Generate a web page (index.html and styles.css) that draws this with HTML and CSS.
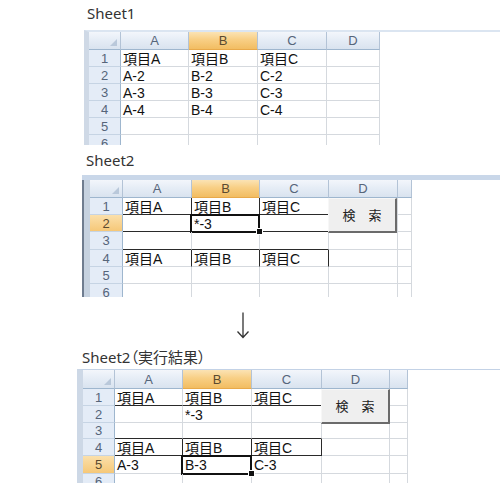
FILE: index.html
```html
<!DOCTYPE html>
<html lang="ja">
<head>
<meta charset="utf-8">
<link rel="stylesheet" href="styles.css">
</head>
<body>
<div class="page">
  <section class="block block1">
    <div class="label">Sheet1</div>
    <div class="sheet sheet1">
      <div class="grid g1">
        <div class="corner"></div><div class="ch">A</div><div class="ch sel">B</div><div class="ch">C</div><div class="ch">D</div>
        <div class="rh">1</div><div class="c">項目A</div><div class="c">項目B</div><div class="c">項目C</div><div class="c"></div>
        <div class="rh">2</div><div class="c">A-2</div><div class="c">B-2</div><div class="c">C-2</div><div class="c"></div>
        <div class="rh">3</div><div class="c">A-3</div><div class="c">B-3</div><div class="c">C-3</div><div class="c"></div>
        <div class="rh">4</div><div class="c">A-4</div><div class="c">B-4</div><div class="c">C-4</div><div class="c"></div>
        <div class="rh">5</div><div class="c"></div><div class="c"></div><div class="c"></div><div class="c"></div>
        <div class="rh">6</div><div class="c"></div><div class="c"></div><div class="c"></div><div class="c"></div>
      </div>
    </div>
  </section>

  <section class="block block2">
    <div class="label">Sheet2</div>
    <div class="sheet sheet2">
      <div class="grid g2">
        <div class="corner"></div><div class="ch">A</div><div class="ch sel">B</div><div class="ch">C</div><div class="ch">D</div><div class="ch"></div>
        <div class="rh">1</div><div class="c db dr">項目A</div><div class="c db dr">項目B</div><div class="c db">項目C</div><div class="c btn-host"><div class="btn">検　索</div></div><div class="c"></div>
        <div class="rh sel">2</div><div class="c db"></div><div class="c db active">*-3<span class="handle"></span></div><div class="c db"></div><div class="c"></div><div class="c"></div>
        <div class="rh">3</div><div class="c db"></div><div class="c db"></div><div class="c db"></div><div class="c"></div><div class="c"></div>
        <div class="rh">4</div><div class="c dr">項目A</div><div class="c dr">項目B</div><div class="c dr">項目C</div><div class="c"></div><div class="c"></div>
        <div class="rh">5</div><div class="c"></div><div class="c"></div><div class="c"></div><div class="c"></div><div class="c"></div>
        <div class="rh">6</div><div class="c"></div><div class="c"></div><div class="c"></div><div class="c"></div><div class="c"></div>
      </div>
    </div>
  </section>

  <div class="arrow">
    <svg width="14" height="27" viewBox="0 0 14 27" aria-hidden="true">
      <path d="M7 0.5 V25.5 M1.5 19.5 L7 25.5 L12.5 19.5" fill="none" stroke="#333" stroke-width="1.3"/>
    </svg>
  </div>

  <section class="block block3">
    <div class="label palt">Sheet2（実行結果）</div>
    <div class="sheet sheet3">
      <div class="grid g3">
        <div class="corner"></div><div class="ch">A</div><div class="ch sel">B</div><div class="ch">C</div><div class="ch">D</div><div class="ch"></div>
        <div class="rh">1</div><div class="c db">項目A</div><div class="c db">項目B</div><div class="c db">項目C</div><div class="c btn-host"><div class="btn">検　索</div></div><div class="c"></div>
        <div class="rh">2</div><div class="c"></div><div class="c">*-3</div><div class="c"></div><div class="c"></div><div class="c"></div>
        <div class="rh">3</div><div class="c db"></div><div class="c db"></div><div class="c db"></div><div class="c"></div><div class="c"></div>
        <div class="rh">4</div><div class="c dr db">項目A</div><div class="c dr db">項目B</div><div class="c dr db">項目C</div><div class="c"></div><div class="c"></div>
        <div class="rh sel">5</div><div class="c">A-3</div><div class="c active">B-3<span class="handle"></span></div><div class="c">C-3</div><div class="c"></div><div class="c"></div>
        <div class="rh">6</div><div class="c"></div><div class="c"></div><div class="c"></div><div class="c"></div><div class="c"></div>
      </div>
    </div>
  </section>
</div>
</body>
</html>
```
FILE: styles.css
```css
html, body {
  margin: 0;
  padding: 0;
  background: #fff;
}
body {
  width: 500px;
  height: 483px;
  overflow: hidden;
  font-family: "Noto Sans CJK JP", "Noto Sans", sans-serif;
  color: #111;
}
.page {
  display: flex;
  flex-direction: column;
}
.label {
  font-family: "Noto Sans", "Noto Sans CJK JP", sans-serif;
  font-size: 15px;
  line-height: 18px;
  height: 18px;
  color: #333;
  white-space: nowrap;
}
.palt {
  font-feature-settings: "palt";
}

/* block placement */
.block1 { padding-top: 4px; }
.block1 .label { margin-left: 87px; }
.block1 .sheet { margin-top: 8px; margin-left: 84px; }

.block2 { padding-top: 6px; }
.block2 .label { margin-left: 86px; }
.block2 .sheet { margin-top: 6px; margin-left: 82px; }

.block3 .label { margin-left: 82px; }
.block3 .sheet { margin-top: 3px; margin-left: 77px; }

.arrow {
  height: 51px;
  padding-left: 236px;
  padding-top: 15px;
  box-sizing: border-box;
}
.arrow svg { display: block; }

/* sheet frames */
.sheet {
  position: relative;
  overflow: hidden;
  align-self: flex-start;
}
.sheet1 {
  height: 113px;
  border-left: 5px solid #cfd9e6;
  border-top: 2px solid #dbe5f1;
}
.sheet2 {
  height: 117px;
  padding-left: 8px;
  border-top: 5px solid #c9d7e9;
  background: linear-gradient(to right, #6f7d90 0 2px, #c6d2e0 2px 8px) no-repeat;
  background-size: 8px 100%;
}
.sheet3 {
  height: 121px;
  border-left: 6px solid #cdd8e6;
  border-top: 1px solid #c3d2e6;
}

/* grids */
.grid {
  display: grid;
}
.g1 {
  grid-template-columns: 32px 68px 69px 69px 53px;
  grid-template-rows: 18px repeat(6, 17px);
}
.g2 {
  grid-template-columns: 33px 69px 68px 69px 69px 14px;
  grid-template-rows: 18px 17px 17px 18px 17px 17px 17px;
}
.g3 {
  grid-template-columns: 32px 68px 69px 70px 68px 18px;
  grid-template-rows: 19px 17px 17px 16px 17px 18px 16px;
}

.grid > div {
  box-sizing: border-box;
  min-width: 0;
}

.c {
  border-right: 1px solid #d5d9de;
  border-bottom: 1px solid #d5d9de;
  font-family: "Liberation Sans", "Noto Sans CJK JP", sans-serif;
  font-size: 14px;
  line-height: 16px;
  padding-left: 2px;
  padding-top: 1px;
  display: flex;
  align-items: center;
  white-space: nowrap;
  position: relative;
}
.c.db { border-bottom-color: #2a2a2a; }
.c.dr { border-right-color: #2a2a2a; }

.ch, .corner {
  background: linear-gradient(to bottom, #f3f6fb 0%, #e6edf6 45%, #d9e3ef 100%);
  border-right: 1px solid #b3c3d6;
  border-bottom: 1px solid #9eb6ce;
  font-family: "Liberation Sans", "Noto Sans", sans-serif;
  font-size: 13px;
  color: #56657a;
  display: flex;
  align-items: center;
  justify-content: center;
}
.corner {
  position: relative;
}
.corner::after {
  content: "";
  position: absolute;
  right: 3px;
  bottom: 3px;
  width: 0;
  height: 0;
  border-left: 7px solid transparent;
  border-bottom: 7px solid #b9c8da;
}
.ch.sel {
  background: linear-gradient(to bottom, #fbe3b4 0%, #f8cf85 45%, #f2bd62 100%);
  border-bottom-color: #e8a94a;
  color: #5a4a30;
}
.rh {
  background: #e4ecf7;
  border-right: 1px solid #9eb6ce;
  border-bottom: 1px solid #c6d4e4;
  font-family: "Liberation Sans", "Noto Sans", sans-serif;
  font-size: 13px;
  color: #56657a;
  display: flex;
  align-items: center;
  justify-content: center;
}
.rh.sel {
  background: linear-gradient(to bottom, #fbe0ab 0%, #f6c878 100%);
  color: #5a4a30;
}

/* active cell selection */
.c.active::before {
  content: "";
  position: absolute;
  left: -2px;
  top: -1px;
  right: -1px;
  bottom: -2px;
  border: 2px solid #111;
  pointer-events: none;
}
.handle {
  position: absolute;
  right: -4px;
  bottom: -4px;
  width: 5px;
  height: 5px;
  background: #111;
  border: 1px solid #fff;
  z-index: 2;
}

/* search button over D1:D2 */
.btn-host {
  overflow: visible;
  z-index: 3;
}
.btn {
  position: absolute;
  left: -1px;
  top: 0;
  width: 69px;
  height: 35px;
  box-sizing: border-box;
  background: #efefef;
  border-top: 1px solid #f7f7f7;
  border-left: 1px solid #f7f7f7;
  border-right: 2px solid #6b6b6b;
  border-bottom: 2px solid #6b6b6b;
  display: flex;
  align-items: center;
  justify-content: center;
  font-family: "Noto Sans CJK JP", sans-serif;
  font-size: 13px;
  color: #222;
}
```
